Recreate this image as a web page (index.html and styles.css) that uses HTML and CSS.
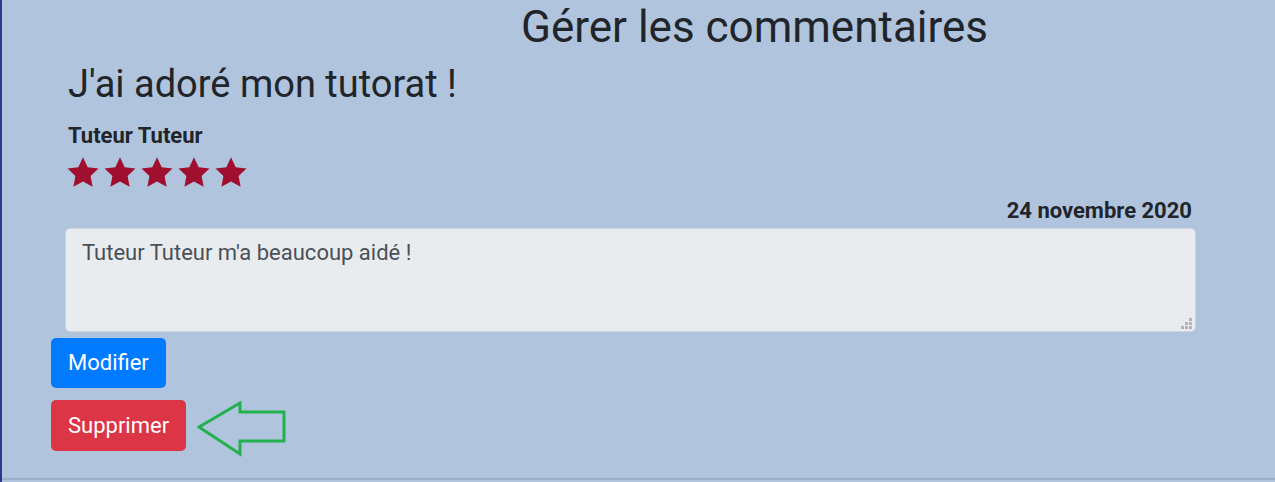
FILE: index.html
```html
<!DOCTYPE html>
<html lang="fr">
<head>
<meta charset="utf-8">
<title>Gérer les commentaires</title>
<link rel="stylesheet" href="styles.css">
</head>
<body>
<div class="page">
  <h1 class="title">Gérer les commentaires</h1>
  <div class="comment">
    <h2 class="comment-title">J'ai adoré mon tutorat !</h2>
    <div class="author">Tuteur Tuteur</div>
    <div class="stars">
      <svg class="star" viewBox="0 0 32 30"><polygon points="16,0.3 20.7,10.2 31.5,11.6 23.6,19.1 25.6,29.8 16,24.6 6.4,29.8 8.4,19.1 0.5,11.6 11.3,10.2"/></svg>
      <svg class="star" viewBox="0 0 32 30"><polygon points="16,0.3 20.7,10.2 31.5,11.6 23.6,19.1 25.6,29.8 16,24.6 6.4,29.8 8.4,19.1 0.5,11.6 11.3,10.2"/></svg>
      <svg class="star" viewBox="0 0 32 30"><polygon points="16,0.3 20.7,10.2 31.5,11.6 23.6,19.1 25.6,29.8 16,24.6 6.4,29.8 8.4,19.1 0.5,11.6 11.3,10.2"/></svg>
      <svg class="star" viewBox="0 0 32 30"><polygon points="16,0.3 20.7,10.2 31.5,11.6 23.6,19.1 25.6,29.8 16,24.6 6.4,29.8 8.4,19.1 0.5,11.6 11.3,10.2"/></svg>
      <svg class="star" viewBox="0 0 32 30"><polygon points="16,0.3 20.7,10.2 31.5,11.6 23.6,19.1 25.6,29.8 16,24.6 6.4,29.8 8.4,19.1 0.5,11.6 11.3,10.2"/></svg>
    </div>
    <div class="date">24 novembre 2020</div>
    <div class="field">
      <textarea class="content" readonly>Tuteur Tuteur m'a beaucoup aidé !</textarea>
      <svg class="grip" width="11" height="11" viewBox="0 0 11 11"><rect x="8" y="0" width="3" height="3"/><rect x="4" y="4" width="3" height="3"/><rect x="8" y="4" width="3" height="3"/><rect x="0" y="8" width="3" height="3"/><rect x="4" y="8" width="3" height="3"/><rect x="8" y="8" width="3" height="3"/></svg>
    </div>
  </div>
  <div class="actions">
    <button class="btn btn-primary">Modifier</button>
    <div class="row">
      <button class="btn btn-danger">Supprimer</button>
      <svg class="arrow" width="92" height="56" viewBox="0 0 92 56"><polygon points="2,26 43,2 43,11 87,11 87,40 43,40 43,53" /></svg>
    </div>
  </div>
</div>
</body>
</html>
```

FILE: styles.css
```css
html, body {
  margin: 0;
  padding: 0;
  height: 100%;
}
body {
  background: #b0c4de;
  font-family: Roboto, "Liberation Sans", sans-serif;
  color: #212529;
  border-left: 2px solid #2b3a8c;
  box-sizing: border-box;
  overflow: hidden;
}
.page {
  height: 478px;
  border-bottom: 2px solid #9db0cb;
  box-sizing: content-box;
  display: flex;
  flex-direction: column;
}
.title {
  margin: 0;
  font-weight: 400;
  font-size: 44px;
  line-height: 54px;
  padding-left: 232px;
  text-align: center;
}
.comment {
  margin: 6px 79px 0 63px;
  display: flex;
  flex-direction: column;
}
.comment-title {
  margin: 0 0 0 3px;
  font-weight: 400;
  font-size: 38px;
  line-height: 48px;
}
.author {
  margin: 15px 0 0 3px;
  font-weight: 700;
  font-size: 22px;
  line-height: 26px;
}
.stars {
  display: flex;
  gap: 5px;
  margin: 8px 0 0 2px;
}
.star {
  width: 32px;
  height: 30px;
  fill: #a0102e;
}
.date {
  align-self: flex-end;
  margin: 11px 4px 0 0;
  font-weight: 700;
  font-size: 22px;
  line-height: 26px;
}
.field {
  position: relative;
  margin-top: 4px;
  display: flex;
}
.content {
  flex: 1;
  margin: 0;
  height: 104px;
  box-sizing: border-box;
  background: #e9ecef;
  border: 1px solid #ced4da;
  border-radius: 5px;
  padding: 10px 16px;
  font-family: Roboto, "Liberation Sans", sans-serif;
  font-size: 22px;
  line-height: 1.25;
  color: #495057;
  outline: none;
  resize: none;
}
.grip {
  position: absolute;
  right: 4px;
  bottom: 3px;
  fill: #b3b3b3;
}
.actions {
  margin: 6px 0 0 49px;
  display: flex;
  flex-direction: column;
  align-items: flex-start;
  gap: 12px;
}
.row {
  display: flex;
  align-items: flex-start;
  gap: 11px;
}
.btn {
  border: none;
  border-radius: 5px;
  color: #fff;
  font-family: Roboto, "Liberation Sans", sans-serif;
  font-size: 22px;
  line-height: 26px;
  padding: 12px 17px;
  height: 50px;
  cursor: pointer;
}
.btn-primary {
  background: #007bff;
}
.btn-danger {
  background: #dc3545;
  height: 51px;
}
.arrow {
  fill: none;
  stroke: #22b14c;
  stroke-width: 3;
  margin-top: 1px;
}
```
